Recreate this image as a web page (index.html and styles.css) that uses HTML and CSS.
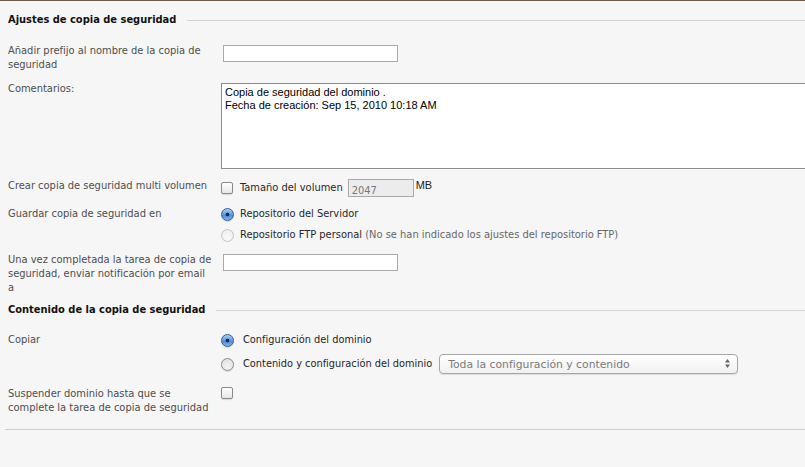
FILE: index.html
```html
<!DOCTYPE html>
<html lang="es">

<head>
	<meta charset="UTF-8">
	<title>Ajustes de copia de seguridad</title>
	<link rel="stylesheet" href="styles.css">
</head>

<body>
	<div class="page">
		<div class="section-title">Ajustes de copia de seguridad</div>

		<div class="row">
			<div class="label">Añadir prefijo al nombre de la copia de<br>seguridad</div>
			<div class="field"><input type="text" class="text-input"></div>
		</div>

		<div class="row">
			<div class="label">Comentarios:</div>
			<div class="field">
				<textarea class="comments">Copia de seguridad del dominio .
Fecha de creación: Sep 15, 2010 10:18 AM</textarea>
			</div>
		</div>

		<div class="row">
			<div class="label">Crear copia de seguridad multi volumen</div>
			<div class="field inline">
				<input type="checkbox" class="check" id="multi">
				<label for="multi" class="opt-text">Tamaño del volumen</label>
				<input type="text" class="volume" value="2047" disabled>
				<span class="unit">MB</span>
			</div>
		</div>

		<div class="row repo-row">
			<div class="label">Guardar copia de seguridad en</div>
			<div class="field options">
				<div class="option">
					<input type="radio" name="repo" class="radio" id="repo1" checked>
					<label for="repo1" class="opt-text">Repositorio del Servidor</label>
				</div>
				<div class="option">
					<input type="radio" name="repo" class="radio" id="repo2" disabled>
					<label for="repo2" class="opt-text">Repositorio FTP personal <span class="hint">(No se han indicado los ajustes del repositorio FTP)</span></label>
				</div>
			</div>
		</div>

		<div class="row">
			<div class="label">Una vez completada la tarea de copia de<br>seguridad, enviar notificación por email<br>a</div>
			<div class="field"><input type="text" class="text-input"></div>
		</div>

		<div class="section-title second">Contenido de la copia de seguridad</div>

		<div class="row copy-row">
			<div class="label">Copiar</div>
			<div class="field options wide">
				<div class="option">
					<input type="radio" name="copy" class="radio" id="copy1" checked>
					<label for="copy1" class="opt-text lucida">Configuración del dominio</label>
				</div>
				<div class="option">
					<input type="radio" name="copy" class="radio" id="copy2">
					<label for="copy2" class="opt-text lucida">Contenido y configuración del dominio</label>
					<div class="select-wrap">
						<select class="select" disabled>
							<option>Toda la configuración y contenido</option>
						</select>
						<svg class="select-arrows" width="7" height="11" viewBox="0 0 7 11">
							<path d="M3.5 1 L6 4.5 L1 4.5 Z" fill="#666" />
							<path d="M3.5 10 L6 6.5 L1 6.5 Z" fill="#666" />
						</svg>
					</div>
				</div>
			</div>
		</div>

		<div class="row">
			<div class="label">Suspender dominio hasta que se<br>complete la tarea de copia de seguridad</div>
			<div class="field"><input type="checkbox" class="check"></div>
		</div>
	</div>
	<div class="end-line"></div>
</body>

</html>
```

FILE: styles.css
```css
body {
	margin: 0;
	background: #f7f6f6;
	border-top: 1px solid #6d5b4f;
	font-family: "DejaVu Sans Condensed", "DejaVu Sans", sans-serif;
	font-size: 11px;
	color: #4d4d4d;
	overflow: hidden;
}

.page {
	padding-left: 8px;
}

.section-title {
	display: flex;
	align-items: center;
	gap: 11px;
	margin: 12px 0 12px;
	line-height: 14px;
	font-weight: bold;
	color: #111;
}

.section-title::after {
	content: '';
	flex: 1;
	border-top: 1px solid #d4d2d2;
}

.section-title.second {
	margin: 3px 0 11px;
}

.row {
	display: grid;
	grid-template-columns: 213px auto;
	padding: 5px 0;
	line-height: 14px;
}

.row.repo-row {
	padding-bottom: 6px;
}

.row.copy-row {
	padding-bottom: 8px;
}

.field {
	display: flex;
	align-items: flex-start;
}

.field.inline {
	align-items: center;
}

.text-input {
	box-sizing: border-box;
	width: 175px;
	height: 17px;
	margin: 1px 0 0 2px;
	padding: 0 3px;
	border: 1px solid #a9a9a9;
	background: #fff;
	font: 11px "Liberation Sans", sans-serif;
}

.comments {
	box-sizing: border-box;
	width: 620px;
	height: 86px;
	margin: 1px 0 0;
	padding: 2px 3px;
	border: 1px solid #8c8c8c;
	background: #fff;
	font: 11px/13px "Liberation Sans Narrow", "Liberation Sans", sans-serif;
	color: #000;
	resize: none;
}

.check {
	appearance: none;
	box-sizing: border-box;
	width: 12px;
	height: 12px;
	margin: 0 7px 0 0;
	border: 1px solid #8a8a8a;
	border-radius: 2px;
	background: linear-gradient(#ffffff, #e6e6e6);
	box-shadow: 0 1px 1px rgba(0, 0, 0, .12);
}

.opt-text {
	color: #262626;
	white-space: nowrap;
}

.volume {
	box-sizing: border-box;
	width: 66px;
	height: 18px;
	margin: 0 2px 0 5px;
	padding: 4px 3px 0;
	border: 1px solid #a9a9a9;
	background: #ececec;
	font: 11px "DejaVu Sans Condensed", sans-serif;
	color: #777;
}

.unit {
	align-self: flex-start;
	margin-top: -1px;
	font-family: "Liberation Sans", sans-serif;
	color: #222;
}

.options {
	flex-direction: column;
	gap: 7px;
}

.option {
	display: flex;
	align-items: center;
	gap: 6px;
}

.options.wide .option {
	gap: 9px;
}

.radio {
	appearance: none;
	box-sizing: border-box;
	width: 13px;
	height: 13px;
	margin: 0;
	border: 1px solid #8e8e8e;
	border-radius: 50%;
	background: radial-gradient(circle at 50% 70%, #f4f4f4, #dcdcdc);
	box-shadow: 0 1px 1px rgba(0, 0, 0, .12);
	flex: none;
}

.radio:checked {
	border-color: #3b5f8f;
	background: radial-gradient(circle, #1d2c44 0, #1d2c44 1.6px, transparent 2.2px),
		linear-gradient(#a9cdf4, #4e8fdc 60%, #7fb3ef);
}

.radio:disabled {
	border-color: #c4c4c4;
	background: radial-gradient(circle at 50% 70%, #fafafa, #ececec);
	box-shadow: none;
}

.hint {
	color: #666;
}

.lucida {
	font-family: "DejaVu Sans", sans-serif;
	font-size: 9.8px;
	color: #1e1e1e;
}

.select-wrap {
	position: relative;
	margin-left: -2px;
}

.select {
	appearance: none;
	box-sizing: border-box;
	width: 299px;
	height: 20px;
	padding: 0 8px;
	border: 1px solid #a6a6a6;
	border-radius: 4px;
	background: linear-gradient(#ffffff, #f1f1f1);
	box-shadow: 0 1px 1px rgba(0, 0, 0, .1);
	font: 10.8px "DejaVu Sans", sans-serif;
	color: #7a7a7a;
	opacity: 1;
}

.select-arrows {
	position: absolute;
	right: 7px;
	top: 4px;
}

.end-line {
	margin: 9px 0 0 5px;
	border-top: 1px solid #cfcdcd;
}
```
